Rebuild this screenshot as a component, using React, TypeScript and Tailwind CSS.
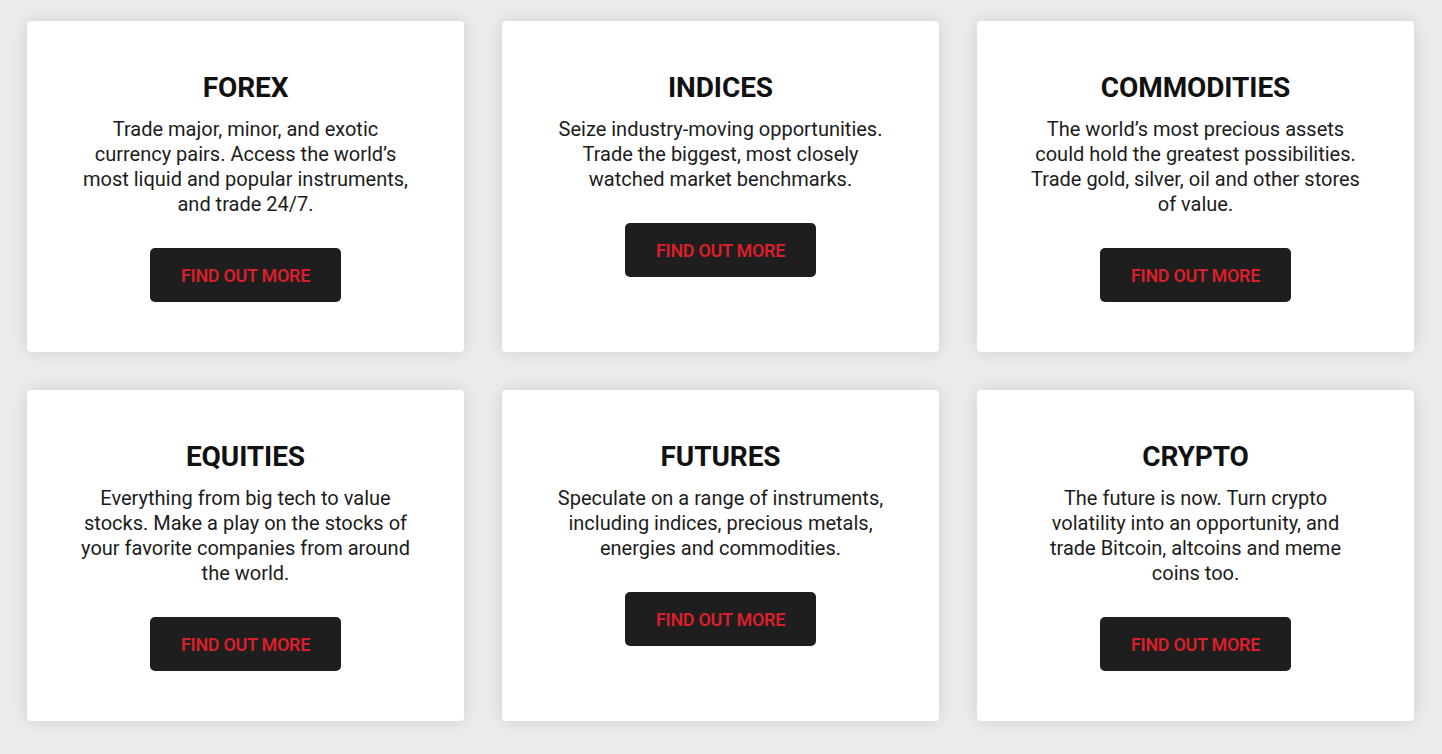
type Market = {
  title: string;
  description: string;
};

const markets: Market[] = [
  {
    title: "FOREX",
    description:
      "Trade major, minor, and exotic currency pairs. Access the world’s most liquid and popular instruments, and trade 24/7.",
  },
  {
    title: "INDICES",
    description:
      "Seize industry-moving opportunities. Trade the biggest, most closely watched market benchmarks.",
  },
  {
    title: "COMMODITIES",
    description:
      "The world’s most precious assets could hold the greatest possibilities. Trade gold, silver, oil and other stores of value.",
  },
  {
    title: "EQUITIES",
    description:
      "Everything from big tech to value stocks. Make a play on the stocks of your favorite companies from around the world.",
  },
  {
    title: "FUTURES",
    description:
      "Speculate on a range of instruments, including indices, precious metals, energies and commodities.",
  },
  {
    title: "CRYPTO",
    description:
      "The future is now. Turn crypto volatility into an opportunity, and trade Bitcoin, altcoins and meme coins too.",
  },
];

const MarketCard: React.FC<{ market: Market }> = ({ market }) => {
  return (
    <div className="flex h-[331px] flex-col items-center rounded-[4px] bg-white px-[50px] pt-[50px] text-center shadow-[0_0_18px_rgba(0,0,0,0.13)]">
      <h2 className="text-[28px] font-bold leading-[34px] tracking-[-0.1px] text-[#111111]">
        {market.title}
      </h2>
      <p className="mt-[12px] text-[20px] leading-[25px] text-[#1c1c1c]">
        {market.description}
      </p>
      <a
        href="#"
        className="mt-[31px] flex h-[54px] w-[191px] items-center justify-center rounded-[5px] bg-[#1e1e1e] text-[18px] font-semibold tracking-[-0.3px] text-[#d9202a]"
      >
        FIND OUT MORE
      </a>
    </div>
  );
};

export default function App() {
  return (
    <div
      className="min-h-[754px] bg-[#ececec] pb-[34px] pl-[27px] pr-[28px] pt-[21px]"
      style={{ fontFamily: "Roboto, 'Liberation Sans', sans-serif" }}
    >
      <div className="grid grid-cols-3 gap-[38px]">
        {markets.map((m) => (
          <MarketCard key={m.title} market={m} />
        ))}
      </div>
    </div>
  );
}
